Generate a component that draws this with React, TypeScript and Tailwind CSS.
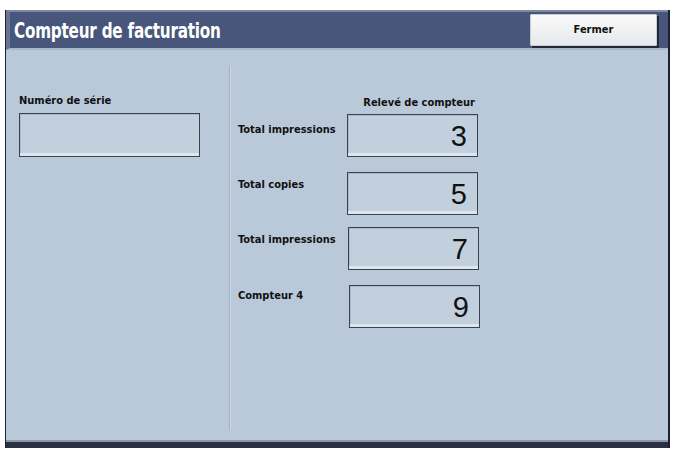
const ui = { fontFamily: '"DejaVu Sans Condensed", "DejaVu Sans", sans-serif' };
const num = { fontFamily: '"Liberation Sans", Arial, sans-serif' };

const rows = [
  { label: "Total impressions", value: "3", mt: "mt-[4px]", lt: "pt-[9px]", ml: "ml-0" },
  { label: "Total copies", value: "5", mt: "mt-[15px]", lt: "pt-[6px]", ml: "ml-0" },
  { label: "Total impressions", value: "7", mt: "mt-[12px]", lt: "pt-[6px]", ml: "ml-[1px]" },
  { label: "Compteur 4", value: "9", mt: "mt-[15px]", lt: "pt-[4px]", ml: "ml-[2px]" },
];

function Field({ value, className = "" }: { value?: string; className?: string }) {
  return (
    <div
      className={`h-[43px] border-[1.5px] border-[#3a414f] bg-[#c2cfdd] shadow-[inset_0_-3px_0_#dde6ee,inset_1px_1px_0_#aab8c8] flex items-center justify-end pr-[10px] ${className}`}
    >
      {value && (
        <span style={num} className="text-[29px] leading-none text-[#111] mt-[2px]">
          {value}
        </span>
      )}
    </div>
  );
}

export default function App() {
  return (
    <div className="w-[673px] h-[451px] bg-white pt-[10px] pl-[5px] pr-[3px] pb-[3px]" style={ui}>
      <div className="h-full flex flex-col border-l-[1.5px] border-r-[2px] border-[#1d2230] bg-[#b9c9d9]">
        <div className="h-[40px] bg-[#47567a] border-t-[2px] border-t-[#7f8aa0] border-l-[4px] border-l-[#6a7790] border-b-[2px] border-b-[#a9b9ca] flex items-center pl-[4px] pr-[11px] justify-between">
          <h1 className="text-white font-bold text-[22px] mt-[1px] scale-x-[0.77] origin-left whitespace-nowrap tracking-[-0.3px]">
            Compteur de facturation
          </h1>
          <button className="w-[127px] h-[32px] bg-gradient-to-b from-[#fafafa] to-[#e6e8ec] border border-[#c8ccd4] shadow-[2px_2px_0_#232838] text-[11px] font-bold text-[#111] rounded-[1px]">
            Fermer
          </button>
        </div>
        <div className="flex-1 flex pt-[16px] pb-[10px]">
          <div className="w-[223px] pl-[13px] pt-[28px]">
            <div className="text-[11px] font-bold text-[#111] leading-[14px]">Numéro de série</div>
            <Field className="mt-[5px] w-[181px] h-[44px]" />
          </div>
          <div className="w-[2px] border-l border-[#9fb0c2] bg-[#d0dbe6]" />
          <div className="flex-1 pl-[7px] pt-[30px]">
            <div className="w-[240px] text-right text-[11px] font-bold text-[#111] leading-[14px] pr-[3px]">
              Relevé de compteur
            </div>
            {rows.map((r, i) => (
              <div key={i} className={`flex ${r.mt}`}>
                <div className={`w-[109px] text-[11px] font-bold text-[#111] leading-[14px] ${r.lt}`}>{r.label}</div>
                <Field value={r.value} className={`w-[131px] ${r.ml}`} />
              </div>
            ))}
          </div>
        </div>
        <div className="h-[8px] bg-[#2a3042] border-t-[2px] border-[#8d99ab]" />
      </div>
    </div>
  );
}
